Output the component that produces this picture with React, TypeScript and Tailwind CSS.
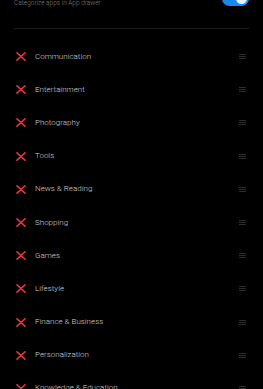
import React from "react";

const items = [
  "Communication",
  "Entertainment",
  "Photography",
  "Tools",
  "News & Reading",
  "Shopping",
  "Games",
  "Lifestyle",
  "Finance & Business",
  "Personalization",
  "Knowledge & Education",
];

function XIcon() {
  return (
    <svg width="10" height="9" viewBox="0 0 10 9" className="shrink-0">
      <path d="M1 0.8 L9 8.2 M9 0.8 L1 8.2" stroke="#e0353a" strokeWidth="1.6" strokeLinecap="round" />
    </svg>
  );
}

function Handle() {
  return (
    <svg width="7" height="5" viewBox="0 0 7 5" className="shrink-0">
      <path d="M0 0.5 H7 M0 2.5 H7 M0 4.5 H7" stroke="#2c2c2c" strokeWidth="1" />
    </svg>
  );
}

export default function App() {
  return (
    <div className="w-[263px] h-[389px] bg-black overflow-hidden" style={{ fontFamily: "Roboto, 'Noto Sans', sans-serif" }}>
      <div className="relative h-[28px] px-[14px]">
        <div className="text-[6.5px] leading-[7px] text-[#7e7e7e] font-light">Categorize apps in App drawer</div>
        <div className="absolute right-[14px] top-[-9px] w-[27px] h-[15px] rounded-full bg-[#1a86f0]">
          <div className="absolute right-[2px] top-[2px] w-[11px] h-[11px] rounded-full bg-[#e8f2ff]" />
        </div>
      </div>
      <div className="mx-[14px] h-px bg-[#1c1c1c]" />
      <div className="pt-[11px]">
        {items.map((name) => (
          <div key={name} className="flex items-center h-[33.2px] pl-[16px] pr-[17px]">
            <XIcon />
            <span className="ml-[9px] flex-1 text-[8px] font-light text-[#d2d2d2]">{name}</span>
            <Handle />
          </div>
        ))}
      </div>
    </div>
  );
}
